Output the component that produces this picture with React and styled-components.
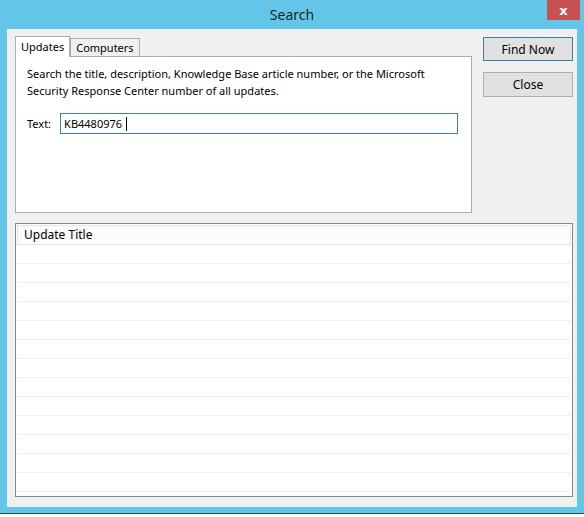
import React from 'react';
import styled, { createGlobalStyle } from 'styled-components';

const Global = createGlobalStyle`
  html, body { margin: 0; padding: 0; background: #fff; }
  body { font-family: "Noto Sans", "Open Sans", sans-serif; font-size: 11px; color: #000; }
`;

const Frame = styled.div`
  width: 584px;
  height: 514px;
  background: #63c6e8;
  border-bottom: 1px solid #2a4a58;
  display: flex;
  flex-direction: column;
  box-sizing: border-box;
`;

const TitleBar = styled.div`
  height: 29px;
  flex: none;
  display: flex;
  align-items: center;
  justify-content: center;
  position: relative;
  font-size: 14px;
  color: #222;
`;

const CloseX = styled.div`
  position: absolute;
  right: 4px;
  top: 0;
  width: 33px;
  height: 20px;
  background: #c75050;
  color: #fff;
  font-weight: bold;
  font-size: 13px;
  display: flex;
  align-items: center;
  justify-content: center;
  font-family: "DejaVu Sans", sans-serif;
`;

const Client = styled.div`
  margin: 0 7px 6px 7px;
  flex: 1;
  min-height: 0;
  background: #f0f0f0;
  padding: 7px 4px 10px 8px;
  display: flex;
  flex-direction: column;
  gap: 10px;
`;

const Top = styled.div`
  display: flex;
  gap: 11px;
  flex: none;
`;

const TabArea = styled.div`
  width: 457px;
  display: flex;
  flex-direction: column;
`;

const TabRow = styled.div`
  display: flex;
  align-items: flex-end;
  height: 21px;
`;

const Tab = styled.div`
  padding: 0 5px;
  height: ${p => (p.active ? '21px' : '19px')};
  line-height: ${p => (p.active ? '19px' : '18px')};
  border: 1px solid #acacac;
  border-bottom: ${p => (p.active ? 'none' : '1px solid #acacac')};
  background: ${p => (p.active ? '#fff' : '#f0f0f0')};
  box-sizing: border-box;
  position: relative;
  z-index: ${p => (p.active ? 1 : 0)};
`;

const Panel = styled.div`
  height: 157px;
  background: #fff;
  border: 1px solid #acacac;
  margin-top: -1px;
  padding: 8px 11px;
  box-sizing: border-box;
`;

const Desc = styled.div`
  line-height: 17px;
`;

const FieldRow = styled.div`
  display: flex;
  align-items: center;
  gap: 9px;
  margin-top: 14px;
`;

const Input = styled.div`
  width: 398px;
  height: 21px;
  border: 1px solid #3c7fb1;
  box-sizing: border-box;
  padding: 0 3px;
  display: flex;
  align-items: center;
`;

const Caret = styled.span`
  width: 1px;
  height: 14px;
  background: #000;
  margin-left: 4px;
`;

const Buttons = styled.div`
  display: flex;
  flex-direction: column;
  gap: 11px;
  padding-top: 1px;
`;

const Button = styled.div`
  width: 90px;
  height: ${p => (p.primary ? '24px' : '25px')};
  box-sizing: border-box;
  border: 1px solid ${p => (p.primary ? '#3c7fb1' : '#acacac')};
  background: #e1e1e1;
  display: flex;
  align-items: center;
  justify-content: center;
  font-size: 12px;
`;

const List = styled.div`
  flex: 1;
  min-height: 0;
  border: 1px solid #828790;
  background: #fff;
  padding: 1px;
  display: flex;
  flex-direction: column;
  overflow: hidden;
`;

const Header = styled.div`
  height: 18px;
  line-height: 18px;
  padding-left: 6px;
  background: #fcfcfc;
  border: 1px solid #e5e5e5;
  flex: none;
  font-size: 12px;
`;

const Row = styled.div`
  height: 19px;
  flex: none;
  border-bottom: 1px solid #f0f0f0;
  box-sizing: border-box;
`;

export default function App() {
  return (
    <>
      <Global />
      <Frame>
        <TitleBar>
          Search
          <CloseX>x</CloseX>
        </TitleBar>
        <Client>
          <Top>
            <TabArea>
              <TabRow>
                <Tab active>Updates</Tab>
                <Tab>Computers</Tab>
              </TabRow>
              <Panel>
                <Desc>
                  Search the title, description, Knowledge Base article number, or the Microsoft
                  <br />
                  Security Response Center number of all updates.
                </Desc>
                <FieldRow>
                  <span>Text:</span>
                  <Input>
                    KB4480976<Caret />
                  </Input>
                </FieldRow>
              </Panel>
            </TabArea>
            <Buttons>
              <Button primary>Find Now</Button>
              <Button>Close</Button>
            </Buttons>
          </Top>
          <List>
            <Header>Update Title</Header>
            {Array.from({ length: 14 }).map((_, i) => (
              <Row key={i} />
            ))}
          </List>
        </Client>
      </Frame>
    </>
  );
}
